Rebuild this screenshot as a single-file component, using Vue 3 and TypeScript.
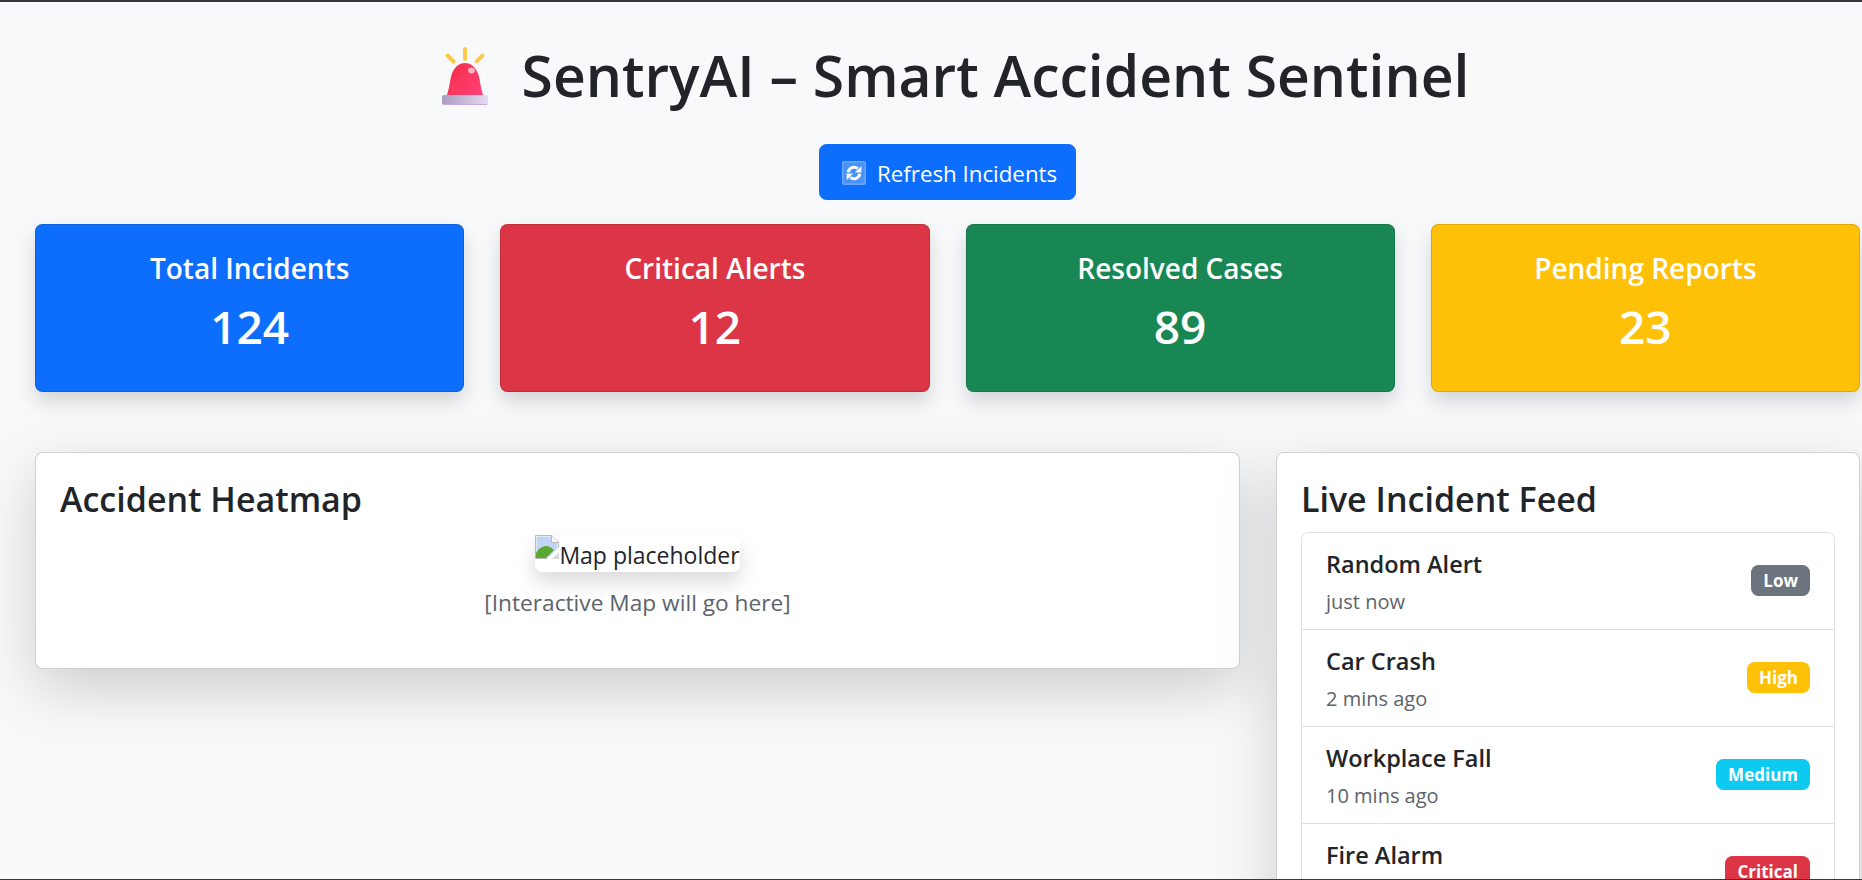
<template>
  <div class="page">
    <h1 class="title">
      <svg class="siren" viewBox="0 0 46 58" aria-hidden="true">
        <defs>
          <linearGradient id="dome" x1="0" y1="0.1" x2="1" y2="0.8">
            <stop offset="0" stop-color="#f52f45" />
            <stop offset="1" stop-color="#ff3f78" />
          </linearGradient>
          <linearGradient id="base" x1="0" y1="0" x2="1" y2="0">
            <stop offset="0" stop-color="#aa9cc2" />
            <stop offset="1" stop-color="#e2dbf0" />
          </linearGradient>
        </defs>
        <path d="M23 2 V12 M5.5 8.5 L11.5 14.5 M40.5 8.5 L34.5 14.5" stroke="#fbc94e" stroke-width="4" stroke-linecap="round" fill="none" />
        <path d="M5 48 C7.5 40 8 33 9.5 28 C12 20 17 16 23 16 C29 16 34 20 36.5 28 C38 33 38.5 40 41 48 Z" fill="url(#dome)" />
        <ellipse cx="29.5" cy="23.5" rx="3.4" ry="3" fill="#ffb3c4" />
        <rect x="0" y="48" width="46" height="10" rx="2" fill="url(#base)" />
        <rect x="1" y="57" width="44" height="1" fill="#c9a8ef" />
      </svg>
      <span>SentryAI – Smart Accident Sentinel</span>
    </h1>

    <div class="actions">
      <button class="refresh" type="button">
        <svg class="refresh-icon" viewBox="0 0 24 24" aria-hidden="true">
          <rect width="24" height="24" rx="2.5" fill="#6ba7f8" />
          <rect x="1.5" y="1.5" width="21" height="21" rx="1.5" fill="#4a92f7" />
          <path d="M6.2 11.2 A5.9 5.9 0 0 1 15.8 7.6" stroke="#f7faff" stroke-width="3" fill="none" />
          <path d="M12.8 11.6 H19.4 V5 Z" fill="#f7faff" />
          <path d="M17.8 12.8 A5.9 5.9 0 0 1 8.2 16.4" stroke="#f7faff" stroke-width="3" fill="none" />
          <path d="M11.2 12.4 H4.6 V19 Z" fill="#f7faff" />
        </svg>
        <span>Refresh Incidents</span>
      </button>
    </div>

    <div class="stats">
      <div v-for="stat in stats" :key="stat.label" class="stat" :class="stat.tone">
        <h4>{{ stat.label }}</h4>
        <div class="stat-value">{{ stat.value }}</div>
      </div>
    </div>

    <div class="columns">
      <section class="panel heatmap">
        <h3>Accident Heatmap</h3>
        <div class="map-slot">
          <div class="broken-img">
            <svg class="broken-icon" viewBox="0 0 24 24" aria-hidden="true">
              <path d="M0.5 0.5 H17 L23.5 7 V14 L14 23.5 H0.5 Z" fill="#fff" stroke="#b9b9b9" />
              <path d="M1.5 1.5 H16 V8 H22.5 V22.5 H1.5 Z" fill="#c3d5f6" />
              <path d="M1 23 V18 C4 13 8 11 11 11 C14 11 17 13 19 15 L11 23 Z" fill="#5aa832" />
              <path d="M16.5 0.5 V7.5 H23.5" fill="#f4f4f4" stroke="#b9b9b9" />
              <path d="M24 12 L12 24 H24 Z" fill="#fff" />
              <path d="M24 17 L17 24 H24 Z" fill="#d9d9d9" />
            </svg>
            <span>Map placeholder</span>
          </div>
        </div>
        <p class="map-note">[Interactive Map will go here]</p>
      </section>

      <section class="panel feed">
        <h3>Live Incident Feed</h3>
        <ul class="feed-list">
          <li v-for="item in incidents" :key="item.name" class="feed-item">
            <div class="feed-text">
              <strong>{{ item.name }}</strong>
              <small>{{ item.time }}</small>
            </div>
            <span class="badge" :class="item.tone">{{ item.level }}</span>
          </li>
        </ul>
      </section>
    </div>
  </div>
</template>

<script setup lang="ts">
interface Stat {
  label: string;
  value: number;
  tone: string;
}

interface Incident {
  name: string;
  time: string;
  level: string;
  tone: string;
}

const stats: Stat[] = [
  { label: "Total Incidents", value: 124, tone: "blue" },
  { label: "Critical Alerts", value: 12, tone: "red" },
  { label: "Resolved Cases", value: 89, tone: "green" },
  { label: "Pending Reports", value: 23, tone: "yellow" },
];

const incidents: Incident[] = [
  { name: "Random Alert", time: "just now", level: "Low", tone: "gray" },
  { name: "Car Crash", time: "2 mins ago", level: "High", tone: "yellow" },
  { name: "Workplace Fall", time: "10 mins ago", level: "Medium", tone: "cyan" },
  { name: "Fire Alarm", time: "15 mins ago", level: "Critical", tone: "red" },
];
</script>

<style>
html,
body {
  margin: 0;
  background: #f8f9fa;
}
</style>

<style scoped>
.page {
  box-sizing: border-box;
  height: 880px;
  overflow: hidden;
  padding: 0 2px 0 35px;
  background: #f8f9fa;
  border-top: 2px solid #35383b;
  border-bottom: 1px solid #35383b;
  color: #212529;
  font-family: "Open Sans", "Noto Sans", sans-serif;
  font-size: 20px;
}

.title {
  display: flex;
  align-items: center;
  justify-content: center;
  gap: 34px;
  margin: 0;
  padding: 33px 0 0 16px;
  height: 81px;
  font-size: 57px;
  font-weight: 600;
  line-height: 1.2;
}

.siren {
  width: 46px;
  height: 58px;
  flex: none;
}

.actions {
  display: flex;
  justify-content: center;
  margin-top: 28px;
}

.refresh {
  display: flex;
  align-items: center;
  gap: 11px;
  box-sizing: border-box;
  width: 257px;
  height: 56px;
  padding: 2px 0 0 22px;
  background: #0d6efd;
  border: 1px solid #0d6efd;
  border-radius: 7.5px;
  color: #fff;
  font-family: inherit;
  font-size: 22.3px;
}

.refresh-icon {
  width: 24px;
  height: 24px;
  flex: none;
}

.stats {
  display: grid;
  grid-template-columns: repeat(4, 1fr);
  gap: 36px;
  margin-top: 24px;
}

.stat {
  box-sizing: border-box;
  height: 168px;
  padding: 27px 25px;
  border: 1px solid rgba(0, 0, 0, 0.125);
  border-radius: 7.5px;
  box-shadow: 0 10px 20px rgba(0, 0, 0, 0.15);
  color: #fff;
  text-align: center;
}

.stat h4 {
  margin: 0 0 13px;
  font-size: 28px;
  font-weight: 600;
  line-height: 1.2;
}

.stat-value {
  font-size: 46px;
  font-weight: 600;
  line-height: 1.2;
}

.blue { background: #0d6efd; }
.red { background: #dc3545; }
.green { background: #198754; }
.yellow { background: #ffc107; }
.cyan { background: #0dcaf0; }
.gray { background: #6c757d; }

.columns {
  display: grid;
  grid-template-columns: 1205px 584px;
  gap: 36px;
  align-items: start;
  margin-top: 60px;
}

.panel {
  box-sizing: border-box;
  padding: 26px 24px;
  background: #fff;
  border: 1px solid rgba(0, 0, 0, 0.175);
  border-radius: 7.5px;
  box-shadow: 0 20px 60px rgba(0, 0, 0, 0.175);
}

.panel h3 {
  margin: 0 0 12px;
  font-size: 34px;
  font-weight: 600;
  line-height: 1.2;
}

.heatmap {
  height: 217px;
}

.map-slot {
  display: flex;
  justify-content: center;
  margin-top: 15px;
}

.broken-img {
  display: flex;
  height: 37px;
  line-height: 40px;
  background: #fff;
  border-radius: 7.5px;
  box-shadow: 0 10px 20px rgba(0, 0, 0, 0.15);
  font-size: 23px;
  white-space: nowrap;
}

.broken-icon {
  width: 24px;
  height: 24px;
  flex: none;
}

.map-note {
  margin: 16px 0 0;
  color: #5c636a;
  font-size: 22.7px;
  line-height: 30px;
  text-align: center;
}

.feed-list {
  margin: 0;
  padding: 0;
  list-style: none;
  border: 1px solid rgba(0, 0, 0, 0.125);
  border-radius: 7.5px;
}

.feed-item {
  display: flex;
  align-items: center;
  justify-content: space-between;
  box-sizing: border-box;
  height: 97px;
  padding: 0 24px;
  border-top: 1px solid rgba(0, 0, 0, 0.125);
}

.feed-item:first-child {
  height: 96px;
  border-top: 0;
}

.feed-text {
  margin-top: 2px;
}

.feed-item strong {
  display: block;
  font-size: 23.5px;
  font-weight: 600;
  line-height: 30px;
}

.feed-item small {
  display: block;
  margin-top: 10px;
  color: #5c636a;
  font-size: 20px;
  line-height: 26px;
}

.badge {
  padding: 0 12px;
  border-radius: 7.5px;
  color: #fff;
  font-size: 17px;
  font-weight: 700;
  line-height: 31px;
}
</style>
